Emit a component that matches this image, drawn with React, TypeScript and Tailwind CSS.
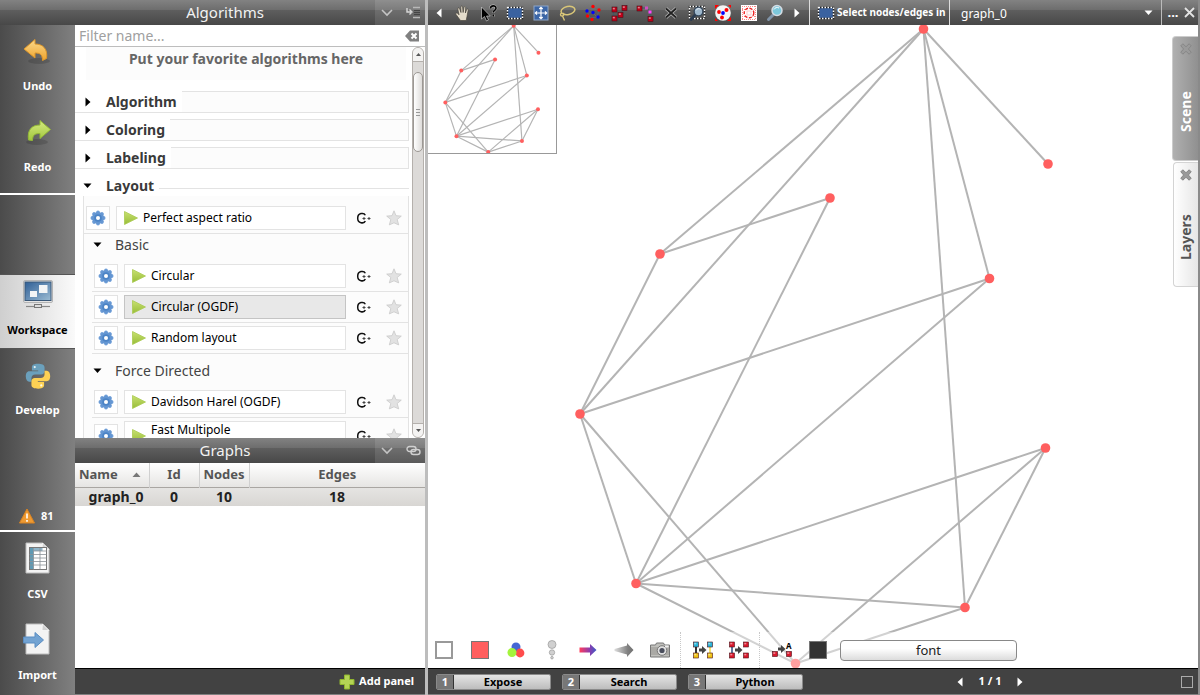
import React, { useState } from "react";

const font = "font-['Noto_Sans','Open_Sans',sans-serif]";
const barBg =
  "bg-[linear-gradient(to_bottom,#828282_0%,#6e6e6e_38%,#5e5e5e_40%,#484848_100%)]";
const footerBg = "border-t border-t-black border-b border-b-[#808080] bg-[#424242]";
const line = "border-[#e3e3e3]";

const nodes: Record<string, [number, number]> = {
  a: [495.5, 4],
  b: [620, 139],
  c: [402, 173],
  d: [232, 229],
  e: [561.5, 253.5],
  f: [152, 389],
  g: [617.5, 423],
  h: [208, 558.5],
  i: [537, 582.5],
  j: [367.5, 638.5],
};

const edges = "ab ad af ae ai cd ch df ef eh fh fj hg hi hj gi gj ij".split(" ");

interface GraphProps {
  viewBox: string;
  stroke: number;
  radius: number;
  className: string;
}

const Graph: React.FC<GraphProps> = ({ viewBox, stroke, radius, className }) => (
  <svg viewBox={viewBox} className={className} aria-hidden="true">
    {edges.map((e) => (
      <line
        key={e}
        x1={nodes[e[0]][0]}
        y1={nodes[e[0]][1]}
        x2={nodes[e[1]][0]}
        y2={nodes[e[1]][1]}
        stroke="#b4b4b4"
        strokeWidth={stroke}
      />
    ))}
    {Object.entries(nodes).map(([id, [x, y]]) => (
      <circle key={id} cx={x} cy={y} r={radius} fill="#ff5f5f" />
    ))}
  </svg>
);

/* ---------- small icons ---------- */

const Triangle = ({ dir, className = "" }: { dir: "l" | "r" | "d" | "u"; className?: string }) => {
  const d = {
    l: "M6.5 0.5v9L1.5 5z",
    r: "M2.5 0.5v9L7.5 5z",
    d: "M0.5 2.5h8L4.5 7z",
    u: "M0.5 7h8L4.5 2.5z",
  }[dir];
  return (
    <svg viewBox="0 0 9 10" width="9" height="10" fill="currentColor" className={className}>
      <path d={d} />
    </svg>
  );
};

const petals = [0, 45, 90, 135, 180, 225, 270, 315];

const Gear = () => (
  <svg viewBox="0 0 16 16" width="16" height="16">
    {petals.map((angle) => (
      <circle key={angle} cx="8" cy="2.4" r="1.9" fill="#6c9cd6" transform={`rotate(${angle} 8 8)`} />
    ))}
    <circle cx="8" cy="8" r="6" fill="#6496d2" />
    <circle cx="8" cy="8" r="3.8" fill="#4c84c6" />
    <circle cx="8" cy="8" r="2" fill="#fff" />
  </svg>
);

const Play = () => (
  <svg viewBox="0 0 16 16" width="16" height="16" className="shrink-0">
    <defs>
      <linearGradient id="play" x1="0" y1="0" x2="0" y2="1">
        <stop offset="0" stopColor="#c8e070" />
        <stop offset="1" stopColor="#98bd38" />
      </linearGradient>
    </defs>
    <path d="M1.5 1.5v13L14.5 8z" fill="url(#play)" stroke="#a9ca52" strokeWidth="0.8" />
  </svg>
);

const Cpp = () => (
  <svg viewBox="0 0 16 14" width="16" height="14" fill="none" stroke="#111">
    <path
      d="M9.300 4.300C8.600 2.600 6.800 2.200 5 2.600 2.600 3.200 1.700 5 1.700 7.200s1 4 3.300 4.500c1.800.4 3.700-.1 4.300-1.700"
      strokeWidth="1.500"
    />
    <path d="M6.500 7.500h3M8 6v3M11.500 7.500h3M13 6v3" stroke="#444" strokeWidth="1" />
  </svg>
);

const Star = () => (
  <svg viewBox="0 0 16 16" width="16" height="16">
    <path
      d="M8 .8l2 4.900 5.300.4-4.100 3.400 1.500 5.400L8 12.800l-4.700 2.100 1.500-5.400L.7 6.100 6 5.700z"
      fill="#e2e2e2"
      stroke="#c9c9c9"
      strokeWidth="0.8"
    />
  </svg>
);

const BoldX = ({ fill, stroke }: { fill: string; stroke: string }) => (
  <svg viewBox="0 0 12 12" width="12" height="12">
    <path
      d="M2.800.8L6 3.700 9.200.8l2 2L8.400 6l2.800 3.200-2 2L6 8.300l-3.200 2.900-2-2L3.600 6 .8 2.800z"
      fill={fill}
      stroke={stroke}
      strokeWidth="0.9"
    />
  </svg>
);

const Chevron = () => (
  <svg viewBox="0 0 12 8" width="12" height="8" fill="none" stroke="#c4c4c4" strokeWidth="1.6">
    <path d="M1 1l5 5 5-5" />
  </svg>
);

const Cross = () => (
  <svg viewBox="0 0 11 11" width="11" height="11" stroke="#e4e4e4" strokeWidth="1.8">
    <path d="M1 1l9 9M10 1l-9 9" />
  </svg>
);

const Cube = ({ x, y, c = "#d8182c" }: { x: number; y: number; c?: string }) => (
  <g>
    <rect x={x} y={y} width="5" height="5" fill={c} stroke="#4a1018" strokeWidth="0.6" />
    <rect x={x + 0.8} y={y + 0.8} width="2" height="1.6" fill="#fff" opacity="0.5" />
  </g>
);

/* ---------- sidebar icons ---------- */

const UndoIcon = () => (
  <svg viewBox="0 0 32 32" width="32" height="32">
    <defs>
      <linearGradient id="undo" x1="0" y1="0" x2="0" y2="1">
        <stop offset="0" stopColor="#fbd98c" />
        <stop offset="1" stopColor="#eea32c" />
      </linearGradient>
    </defs>
    <ellipse cx="17" cy="27" rx="11" ry="3" fill="#000" opacity="0.14" />
    <path d="M2 15L13 5.500V10c8 0 13 5 11.500 14.500l-4 2c0-6-2.500-7.500-7.500-7.500v5z" fill="url(#undo)" stroke="#dc962a" />
  </svg>
);

const RedoIcon = () => (
  <svg viewBox="0 0 32 32" width="32" height="32">
    <defs>
      <linearGradient id="redo" x1="0" y1="0" x2="0" y2="1">
        <stop offset="0" stopColor="#d6ea80" />
        <stop offset="1" stopColor="#a0c63c" />
      </linearGradient>
    </defs>
    <ellipse cx="15" cy="27" rx="11" ry="3" fill="#000" opacity="0.14" />
    <path d="M28.500 14.500L18 5.500V10C10 10 5 14.500 6.500 25l4 .5c0-6 3-7 7.500-7v5z" fill="url(#redo)" stroke="#93b936" />
  </svg>
);

const WorkspaceIcon = () => (
  <svg viewBox="0 0 32 32" width="32" height="32">
    <defs>
      <linearGradient id="screen" x1="0" y1="0" x2="1" y2="1">
        <stop offset="0" stopColor="#2f5f96" />
        <stop offset="1" stopColor="#9cbcd4" />
      </linearGradient>
    </defs>
    <rect x="1.500" y="2.500" width="29" height="22" rx="1.500" fill="#e4e4e4" stroke="#b4b4b4" />
    <rect x="3" y="4" width="26" height="18.500" fill="url(#screen)" stroke="#3a5878" />
    <rect x="17" y="7" width="8.500" height="8" fill="#f2f4f6" />
    <rect x="8" y="13" width="7" height="6" fill="#f2f4f6" />
    <path d="M4 28.500h24" stroke="#888" strokeWidth="1.200" />
    <rect x="12.500" y="26.500" width="7" height="3" fill="#ddd" stroke="#777" />
  </svg>
);

const PythonIcon = () => (
  <svg viewBox="0 0 32 32" width="30" height="30">
    <path
      d="M15.800 3c-6 0-6.300 2.500-6.300 3.800V10h6.700v1H6.800C4 11 3 13.500 3 16.500S4.500 22 6.600 22H9v-3.500c0-2.400 1.700-4 4-4h6.500c2 0 3.500-1.500 3.500-3.500V6.800C23 4 20 3 15.800 3z"
      fill="#6ba0bc"
    />
    <path
      d="M16.200 29.500c6 0 6.300-2.500 6.300-3.800v-3.200h-6.700v-1h9.400c2.800 0 3.800-2.500 3.800-5.500s-1.500-5.500-3.600-5.500H23V14c0 2.400-1.700 4-4 4h-6.500c-2 0-3.500 1.500-3.500 3.500v4.200c0 2.800 3 3.800 7.200 3.800z"
      fill="#fdd154"
    />
    <circle cx="12.500" cy="6.500" r="1.200" fill="#e8f2f6" />
    <circle cx="19.500" cy="26" r="1.200" fill="#fffbe8" />
  </svg>
);

const Paper = ({ children }: { children: React.ReactNode }) => (
  <svg viewBox="0 0 32 32" width="32" height="32">
    <path d="M4 1h16.500l6.500 6v24H4z" fill="#f3f3f3" stroke="#bdbdbd" />
    <path d="M20.500 1L20 7.500h7z" fill="#d0d0d0" stroke="#fff" strokeWidth="0.6" />
    {children}
  </svg>
);

const CsvIcon = () => (
  <Paper>
    <rect x="7.500" y="5.500" width="17" height="22" fill="#fff" stroke="#777" />
    <rect x="8" y="6" width="3.500" height="21" fill="#5f9ab4" />
    <rect x="11.500" y="6" width="9" height="3" fill="#8fb4c8" />
    <path
      d="M11.500 9h13M7.500 12.500h17M7.500 16h17M7.500 19.500h17M7.500 23h17M11.500 6v21.500M18 6v21.500"
      stroke="#8a9298"
      strokeWidth="0.8"
    />
  </Paper>
);

const ImportIcon = () => (
  <Paper>
    <path d="M1.500 14H13V9.500l8.500 7.500-8.500 7.500V20H1.500z" fill="#73a3d2" stroke="#5a8dc2" />
  </Paper>
);

interface NavItemProps {
  label: string;
  icon: React.ReactNode;
  className: string;
}

const NavItem: React.FC<NavItemProps> = ({ label, icon, className }) => (
  <button className={`flex w-full shrink-0 flex-col items-center text-[11px] font-bold leading-4 ${className}`}>
    <span className="flex h-8 items-center">{icon}</span>
    <span className="mt-2">{label}</span>
  </button>
);

const Sidebar = () => (
  <nav className="flex w-[75px] shrink-0 flex-col bg-linear-to-r from-[#4b4b4b] to-[#808080]">
    <div className="h-[170px] shrink-0 border-b-2 border-white">
      <NavItem label="Undo" icon={<UndoIcon />} className="h-[81px] gap-1 pt-[9px] text-white" />
      <NavItem label="Redo" icon={<RedoIcon />} className="h-[81px] gap-1 pt-[9px] text-white" />
    </div>
    <div className="h-[79px] shrink-0" />
    <NavItem
      label="Workspace"
      icon={<WorkspaceIcon />}
      className="h-[75px] gap-1 border-y border-[#555] bg-linear-to-r from-[#cfcfcf] to-[#fafafa] pt-[3px] text-black"
    />
    <NavItem label="Develop" icon={<PythonIcon />} className="h-[81px] gap-[2px] pt-[11px] text-white" />
    <div className="flex-1" />
    <button className="flex h-7 shrink-0 items-center gap-[6px] pl-[19px] text-[11px] font-bold text-white">
      <svg viewBox="0 0 16 16" width="16" height="16">
        <path d="M8 1l7.500 14H.5z" fill="#ee9a32" stroke="#d98322" strokeLinejoin="round" />
        <path d="M8 5.500v5M8 12v1.800" stroke="#fff" strokeWidth="1.600" />
      </svg>
      81
    </button>
    <div className="h-[165px] shrink-0 border-t-2 border-white">
      <NavItem label="CSV" icon={<CsvIcon />} className="h-[81px] gap-1 pt-[10px] text-white" />
      <NavItem label="Import" icon={<ImportIcon />} className="h-[81px] gap-1 pt-[10px] text-white" />
    </div>
  </nav>
);

/* ---------- algorithms ---------- */

const PanelHeader = ({ title, children }: { title: string; children: React.ReactNode }) => (
  <header className={`flex h-[25px] shrink-0 items-center text-[15px] text-[#f2f2f2] ${barBg}`}>
    <h2 className="flex-1 text-center">{title}</h2>
    <div className="flex h-full w-[50px] items-center justify-between bg-white/10 pr-1 pl-[6px]">
      <button aria-label="Collapse">
        <Chevron />
      </button>
      {children}
    </div>
  </header>
);

const ClosedGroup = ({ title }: { title: string }) => (
  <section className="mt-[6px] flex h-[22px]">
    <button className={`flex items-center border-b pr-[5px] pl-2 text-[14px] font-bold ${line}`}>
      <Triangle dir="r" className="mr-[14px] text-black" />
      {title}
    </button>
    <div className={`flex-1 border border-l-0 bg-[#fcfcfc] ${line}`} />
  </section>
);

interface RowProps {
  name: string;
  active?: boolean;
  tall?: boolean;
}

const AlgorithmRow: React.FC<RowProps> = ({ name, active = false, tall = false }) => (
  <div className={`flex items-center border-b pr-[6px] pl-[2px] ${line} ${tall ? "h-[37px]" : "h-[31px]"}`}>
    <button
      aria-label={`${name} settings`}
      className={`flex size-6 shrink-0 items-center justify-center border bg-white ${line}`}
    >
      <Gear />
    </button>
    <button
      className={`ml-[6px] flex min-w-0 flex-1 items-center gap-1 border pl-[6px] text-left text-[12px] leading-4 text-black ${
        tall ? "h-[30px]" : "h-6"
      } ${active ? "border-[#c4c4c4] bg-[#e8e8e8]" : "border-[#e3e3e3] bg-white"}`}
    >
      <Play />
      <span className={tall ? "self-start" : ""}>{name}</span>
    </button>
    <span className="ml-[10px]">
      <Cpp />
    </span>
    <button aria-label={`Add ${name} to favorites`} className="ml-[14px]">
      <Star />
    </button>
  </div>
);

const SubGroup = ({ title, className = "", items }: { title: string; className?: string; items: RowProps[] }) => (
  <section className="ml-2">
    <button className={`flex w-full items-center text-[14px] text-[#444] ${className}`}>
      <Triangle dir="d" className="mr-[13px] ml-px text-black" />
      {title}
    </button>
    {items.map((item) => (
      <AlgorithmRow key={item.name} {...item} />
    ))}
  </section>
);

const ScrollBar = () => (
  <div className="flex w-3 shrink-0 flex-col rounded-md border border-[#b4b0ac] bg-[#dcdad8]" aria-hidden="true">
    <div className="flex h-[14px] items-center justify-center rounded-t-md border-b border-[#b4b0ac] bg-[#f4f3f2]">
      <svg width="5" height="3" viewBox="0 0 5 3">
        <path d="M0 3h5L2.500 0z" fill="#555" />
      </svg>
    </div>
    <div className="mt-[10px] flex h-20 flex-col items-center justify-center gap-[2px] rounded-md border border-[#9c9894] bg-linear-to-r from-white to-[#dedcda]">
      <i className="h-px w-1 bg-[#999]" />
      <i className="h-px w-1 bg-[#999]" />
      <i className="h-px w-1 bg-[#999]" />
    </div>
    <div className="flex-1" />
    <div className="flex h-[14px] items-center justify-center rounded-b-md border-t border-[#b4b0ac] bg-[#f4f3f2]">
      <svg width="5" height="3" viewBox="0 0 5 3">
        <path d="M0 0h5L2.500 3z" fill="#555" />
      </svg>
    </div>
  </div>
);

const Algorithms = () => {
  const [filter, setFilter] = useState("");

  return (
    <section className="flex min-h-0 flex-1 flex-col bg-white text-[#3a3a3a]">
      <div className="flex h-[22px] shrink-0 items-center border-b border-[#bdbdbd] pr-[6px] pl-1">
        <input
          aria-label="Filter name"
          placeholder="Filter name..."
          value={filter}
          onChange={(e) => setFilter(e.target.value)}
          className="min-w-0 flex-1 text-[14px] leading-5 outline-none placeholder:text-[#a0a0a0]"
        />
        <button aria-label="Clear filter" onClick={() => setFilter("")}>
          <svg viewBox="0 0 14 12" width="14" height="12">
            <path d="M0 6l5-5.500h9v11H5z" fill="#808080" />
            <path d="M6.500 3.500l5 5M11.500 3.500l-5 5" stroke="#fff" strokeWidth="2" />
          </svg>
        </button>
      </div>
      <div className="flex min-h-0 flex-1">
        <div className="min-w-0 flex-1 overflow-hidden">
          <p className="mr-[3px] ml-[11px] h-[33px] bg-[#fcfcfc] pt-[2px] text-center text-[14px] font-bold leading-5 text-[#666]">
            Put your favorite algorithms here
          </p>
          <div className="pt-[5px]">
            <ClosedGroup title="Algorithm" />
            <ClosedGroup title="Coloring" />
            <ClosedGroup title="Labeling" />
          </div>
          <section>
            <div className="flex h-[27px] items-center pt-[7px]">
              <button className="flex items-center pr-[5px] pl-2 text-[14px] font-bold leading-5">
                <Triangle dir="d" className="mr-[14px] text-black" />
                Layout
              </button>
              <div className={`mt-1 h-px flex-1 border-t ${line}`} />
            </div>
            <div className={`ml-2 border-x bg-[#fcfcfc] pt-[7px] ${line}`}>
              <AlgorithmRow name="Perfect aspect ratio" />
              <SubGroup
                title="Basic"
                className="h-[27px] pb-[6px]"
                items={[{ name: "Circular" }, { name: "Circular (OGDF)", active: true }, { name: "Random layout" }]}
              />
              <SubGroup
                title="Force Directed"
                className="h-[33px]"
                items={[{ name: "Davidson Harel (OGDF)" }, { name: "Fast Multipole", tall: true }]}
              />
            </div>
          </section>
        </div>
        <div className="flex pr-px pl-[3px]">
          <ScrollBar />
        </div>
      </div>
    </section>
  );
};

const Graphs = () => (
  <section className="flex h-[257px] shrink-0 flex-col bg-white">
    <PanelHeader title="Graphs">
      <button aria-label="Link graphs">
        <svg viewBox="0 0 15 11" width="15" height="11" fill="none" stroke="#d0d0d0" strokeWidth="1.400">
          <rect x="1" y="1.500" width="9" height="5" rx="2.500" />
          <rect x="5" y="4.500" width="9" height="5" rx="2.500" />
        </svg>
      </button>
    </PanelHeader>
    <table className="w-full table-fixed text-[13px] font-bold">
      <thead className="bg-linear-to-b from-white to-[#e6e5e3] text-[#555]">
        <tr className="h-6 border-b border-[#a9a6a2]">
          <th className="w-[74px] border-r border-[#d0d0d0] pl-1 text-left">
            <span className="flex items-center justify-between pr-2">
              Name
              <Triangle dir="u" className="text-[#777]" />
            </span>
          </th>
          <th className="w-[50px] border-r border-[#d0d0d0]">Id</th>
          <th className="w-[50px] border-r border-[#d0d0d0]">Nodes</th>
          <th>Edges</th>
        </tr>
      </thead>
      <tbody className="text-center text-[14px] text-[#222]">
        <tr className="h-[19px] bg-linear-to-b from-[#e6e5e3] to-[#d8d6d3] leading-4">
          <td className="pl-2">graph_0</td>
          <td>0</td>
          <td>10</td>
          <td>18</td>
        </tr>
      </tbody>
    </table>
    <div className="flex-1" />
    <footer className={`flex h-[27px] shrink-0 items-center justify-end pr-[11px] ${footerBg}`}>
      <button className="flex items-center gap-1 text-[11px] font-bold text-white">
        <svg viewBox="0 0 16 16" width="16" height="16">
          <path d="M5.500 1h5v4.500H15v5h-4.500V15h-5v-4.500H1v-5h4.500z" fill="#b4d455" stroke="#8fb52f" />
        </svg>
        Add panel
      </button>
    </footer>
  </section>
);

/* ---------- view tool bar ---------- */

const Marquee = () => (
  <>
    <rect x="1.500" y="3.500" width="15" height="11" fill="#3a62a0" stroke="#222" strokeWidth="1.500" />
    <rect x="1.500" y="3.500" width="15" height="11" fill="none" stroke="#fff" strokeWidth="1.500" strokeDasharray="1.500 1.500" />
  </>
);

const tools: { label: string; icon: React.ReactNode }[] = [
  {
    label: "Navigate",
    icon: (
      <path
        d="M6.500 16.500L2 10.500c-.8-1.200.8-2 1.600-1.200L5 10.800 3.800 5c-.2-1.200 1.400-1.600 1.800-.4L7 8.500 6.800 3c0-1.300 1.700-1.300 1.800 0l.5 5.500L10 3.400c.2-1.200 1.800-1 1.700.3l-.3 5.300 1.200-3.400c.4-1.100 1.800-.7 1.600.5L13 12.500l-.8 4z"
        fill="#e4dccb"
        stroke="#4a463e"
        strokeWidth="0.7"
      />
    ),
  },
  {
    label: "Get information",
    icon: (
      <>
        <path d="M1.500 3v12l3-2.500L6.500 17l2-1-2-4h3.800z" fill="#000" stroke="#ddd" strokeWidth="0.6" />
        <path d="M10.500 4.500C10.500 1 16 1 16 4.300c0 2-2.800 2.200-2.800 4.500M13.200 10.500v2" stroke="#c8c8c8" strokeWidth="2.600" fill="none" />
        <path d="M10.500 4.500C10.500 1 16 1 16 4.300c0 2-2.800 2.200-2.800 4.200M13.200 10.500v2" stroke="#000" strokeWidth="1.600" fill="none" />
      </>
    ),
  },
  { label: "Rectangle selection", icon: <Marquee /> },
  {
    label: "Move selection",
    icon: (
      <>
        <rect x="2" y="2" width="14" height="14" fill="#3c66a6" stroke="#8ea6c8" />
        <path d="M9 3.500v11M3.500 9h11M7.300 5L9 3.300 10.700 5M7.300 13L9 14.700l1.700-1.700M5 7.300L3.300 9 5 10.700M13 7.300L14.700 9 13 10.700" fill="none" stroke="#fff" strokeWidth="1.200" />
      </>
    ),
  },
  {
    label: "Lasso selection",
    icon: (
      <>
        <ellipse cx="10" cy="6.500" rx="7" ry="4" fill="none" stroke="#d9c678" strokeWidth="1.500" transform="rotate(-12 10 6.500)" />
        <path d="M4 9c-2 .5-2 3 0 3s2.500-2 1-2.800M4.500 12l2 4.500" fill="none" stroke="#d9c678" strokeWidth="1.400" />
      </>
    ),
  },
  {
    label: "Select reachable nodes",
    icon: (
      <>
        <path d="M3 7l6-4 6 3-2 7-7 1zM3 7l6 2 4 4" fill="none" stroke="#667" strokeWidth="0.7" />
        {[[9, 2.5], [15, 6], [3.5, 12], [8, 15.5]].map(([x, y]) => (
          <circle key={x} cx={x} cy={y} r="1.700" fill="#f00" />
        ))}
        {[[3, 7], [9, 8.5], [14, 13]].map(([x, y]) => (
          <circle key={x} cx={x} cy={y} r="1.700" fill="#00f" />
        ))}
      </>
    ),
  },
  {
    label: "Add nodes and edges",
    icon: (
      <>
        <path d="M3.500 5v9M14 4l-4 7" stroke="#456" />
        <Cube x={2} y={3} c="#c00018" />
        <Cube x={2} y={12} c="#c00018" />
        <Cube x={8} y={8.5} c="#c00018" />
        <Cube x={12} y={1.5} c="#c00018" />
      </>
    ),
  },
  {
    label: "Edit edge bends",
    icon: (
      <>
        <path d="M3 4h8l3 4v7" stroke="#456" fill="none" />
        <Cube x={1} y={2} c="#c00018" />
        <Cube x={12} y={12.5} c="#c00018" />
        <rect x="9" y="2.500" width="3" height="3" fill="#d050c0" />
        <rect x="12.500" y="6.500" width="3" height="3" fill="#f4f" />
      </>
    ),
  },
  {
    label: "Delete",
    icon: (
      <>
        <path d="M4 4.500l10 9M14 4.500l-10 9" stroke="#bbb" strokeWidth="3.400" />
        <path d="M4 4.500l10 9M14 4.500l-10 9" stroke="#222" strokeWidth="1.900" />
      </>
    ),
  },
  {
    label: "Zoom on rectangle",
    icon: (
      <>
        <rect x="1.500" y="2.500" width="15" height="12" fill="none" stroke="#222" strokeWidth="1.500" />
        <rect x="1.500" y="2.500" width="15" height="12" fill="none" stroke="#fff" strokeWidth="1.500" strokeDasharray="1.500 1.500" />
        <path d="M7.500 10.500L3 15.500" stroke="#2c3c50" strokeWidth="2.800" strokeLinecap="round" />
        <circle cx="10.500" cy="7.500" r="4.400" fill="#9fb8cc" stroke="#34475c" strokeWidth="1.400" />
        <path d="M8 6.500c1-2 3-2.500 4.500-1" stroke="#e8f0f6" fill="none" />
      </>
    ),
  },
  {
    label: "Fish eye",
    icon: (
      <>
        <path d="M1 1h4L1 5zM17 17h-4l4-4zM1 17h3l-3-3zM17 1h-3l3 3z" fill="#f00" />
        <circle cx="9" cy="9" r="7.800" fill="#f4f4f4" />
        <circle cx="5" cy="8" r="1.900" fill="#f00" />
        <circle cx="12.500" cy="6" r="2" fill="#f00" />
        <circle cx="8" cy="13.500" r="1.900" fill="#f00" />
        <circle cx="9" cy="9" r="1.900" fill="#00f" />
      </>
    ),
  },
  {
    label: "Magnifying grid",
    icon: (
      <>
        <rect x="1" y="1" width="16" height="16" fill="#fff" />
        <path d="M2 2.500h14M2 15.500h14M2.500 2v14M15.500 2v14M2 5.500h14M2 12.500h14" stroke="#f88" strokeDasharray="1 1" />
        <circle cx="9" cy="9" r="4.800" fill="#fff" stroke="#e22" strokeWidth="1.400" strokeDasharray="3 1.500" />
        <rect x="7" y="7" width="4" height="4" fill="none" stroke="#fcc" />
      </>
    ),
  },
  {
    label: "Magnify",
    icon: (
      <>
        <path d="M7.500 10.500l-5 5" stroke="#8094a8" strokeWidth="3" strokeLinecap="round" />
        <circle cx="11" cy="6.500" r="5" fill="#7cc8dc" stroke="#d4dce4" strokeWidth="1.500" />
        <path d="M8 5.500c1-2 3-2.500 5-1.500" stroke="#fff" fill="none" />
      </>
    ),
  },
];

const Toolbar = () => (
  <header className={`flex h-[25px] shrink-0 items-center text-white ${barBg}`}>
    <button aria-label="Previous tools" className="flex w-[22px] justify-center">
      <Triangle dir="l" />
    </button>
    {tools.map((tool) => (
      <button key={tool.label} aria-label={tool.label} className="flex w-[26px] shrink-0 justify-center">
        <svg viewBox="0 0 18 18" width="18" height="18">
          {tool.icon}
        </svg>
      </button>
    ))}
    <button aria-label="Next tools" className="flex w-[21px] justify-center pr-1">
      <Triangle dir="r" />
    </button>
    <label
      htmlFor="graph"
      className="flex h-full w-[141px] shrink-0 items-center gap-[2px] border-x border-[#ddd] pl-[7px] text-[10px] font-bold whitespace-nowrap"
    >
      <svg viewBox="0 0 18 18" width="18" height="18" className="shrink-0">
        <Marquee />
      </svg>
      Select nodes/edges in
    </label>
    <div className="relative h-full min-w-0 flex-1 border-r border-[#bbb]">
      <select id="graph" className="h-full w-full appearance-none bg-transparent pl-[11px] text-[12px] outline-none">
        <option>graph_0</option>
      </select>
      <Triangle dir="d" className="pointer-events-none absolute top-2 right-2" />
    </div>
    <button className="w-[22px] text-[13px] font-bold">...</button>
    <button aria-label="Close view" className="mr-[3px]">
      <Cross />
    </button>
  </header>
);

/* ---------- rendering options under the canvas ---------- */

const Option = ({ label, children }: { label: string; children: React.ReactNode }) => (
  <button aria-label={label} className="flex w-9 shrink-0 justify-center">
    {children}
  </button>
);

const Dots = () => <span className="mr-1 ml-[2px] h-9 w-px shrink-0 border-l border-dotted border-[#c8c8c8]" />;

const QuickAccess = () => (
  <div className="absolute inset-x-0 bottom-0 flex h-9 items-center bg-white/40">
    <button aria-label="Background color" className="ml-[7px] size-[18px] shrink-0 border-2 border-[#999] bg-white" />
    <button aria-label="Node color" className="mr-[9px] ml-[18px] size-[18px] shrink-0 border border-[#777] bg-[#ff5f5f]" />
    <Option label="Color interpolation">
      <svg viewBox="0 0 18 18" width="18" height="18">
        <circle cx="9" cy="6" r="4.500" fill="#4466d4" />
        <circle cx="13" cy="12" r="4.400" fill="#ff4c4c" />
        <circle cx="5" cy="11.500" r="4.500" fill="#a4f43c" />
      </svg>
    </Option>
    <Option label="Size interpolation">
      <svg viewBox="0 0 12 20" width="12" height="20" fill="#d0d0d0" stroke="#999" strokeWidth="0.7">
        <circle cx="6" cy="4.500" r="4" />
        <circle cx="6" cy="12.500" r="2.700" />
        <circle cx="6" cy="17.700" r="1.300" />
      </svg>
    </Option>
    <Option label="Edge color interpolation">
      <svg viewBox="0 0 18 14" width="18" height="14">
        <defs>
          <linearGradient id="ecol">
            <stop offset="0" stopColor="#ff3c5c" />
            <stop offset="0.600" stopColor="#8a3cae" />
            <stop offset="1" stopColor="#3c5cc4" />
          </linearGradient>
        </defs>
        <path d="M.5 4.500H11V1l6.500 6-6.500 6V9.500H.5z" fill="url(#ecol)" />
      </svg>
    </Option>
    <Option label="Edge size interpolation">
      <svg viewBox="0 0 20 14" width="20" height="14">
        <defs>
          <linearGradient id="esize">
            <stop offset="0" stopColor="#ddd" />
            <stop offset="0.700" stopColor="#808080" />
            <stop offset="1" stopColor="#707070" />
          </linearGradient>
        </defs>
        <path d="M.5 6L13 2.500V0l6.500 7L13 14v-2.500L.5 8z" fill="url(#esize)" />
      </svg>
    </Option>
    <Option label="Snapshot">
      <svg viewBox="0 0 20 16" width="20" height="16">
        <path d="M.5 3h5l1-2h7l1 2h5v12H.5z" fill="#c0c0bc" stroke="#777" />
        <path d="M1 5h18v8H1z" fill="#aaa9a5" />
        <circle cx="12" cy="8.500" r="4.800" fill="#e0e0e0" stroke="#777" />
        <circle cx="12" cy="8.500" r="2.600" fill="#4a4e5c" />
        <rect x="15" y="3.500" width="3.500" height="2" fill="#eee" />
      </svg>
    </Option>
    <Dots />
    <Option label="Edge color from nodes">
      <svg viewBox="0 0 20 18" width="20" height="18">
        <path d="M3 4v10" stroke="#000" strokeWidth="1.600" />
        <path d="M17 4v10" stroke="#f0dc50" strokeWidth="1.600" />
        <path d="M6 7.500h3V5l4.500 4L9 13v-2.500H6z" fill="#444" />
        <Cube x={0.5} y={1} c="#28b4d8" />
        <Cube x={14.5} y={1} c="#28b4d8" />
        <Cube x={0.5} y={12} c="#f0c414" />
        <Cube x={14.5} y={12} c="#f0c414" />
      </svg>
    </Option>
    <Option label="Display edges">
      <svg viewBox="0 0 20 18" width="20" height="18">
        <path d="M3 4v10" stroke="#3a5484" strokeWidth="1.600" />
        <path d="M6 7.500h3V5l4.500 4L9 13v-2.500H6z" fill="#444" />
        <Cube x={0.5} y={1} />
        <Cube x={14.5} y={1} />
        <Cube x={0.5} y={12} />
        <Cube x={14.5} y={12} />
      </svg>
    </Option>
    <Dots />
    <Option label="Display labels">
      <svg viewBox="0 0 20 18" width="20" height="18">
        <path d="M6 6.500h3V4l4.500 4L9 12V9.500H6z" fill="#444" />
        <Cube x={0.5} y={10.5} />
        <Cube x={14.5} y={10.5} />
        <text x="14" y="8" fontSize="8" fontWeight="bold" fill="#000">
          A
        </text>
      </svg>
    </Option>
    <button aria-label="Label color" className="ml-[9px] size-[18px] shrink-0 border border-[#777] bg-[#333]" />
    <button className="ml-[13px] h-[21px] w-[177px] rounded-sm border border-[#888] bg-linear-to-b from-white from-40% to-[#dcdcdc] text-[13px] leading-4 text-[#222]">
      font
    </button>
  </div>
);

const SideTab = ({ label, active = false }: { label: string; active?: boolean }) => (
  <div
    className={`flex h-[125px] flex-col items-center rounded-l-[4px] border border-r-0 pt-[6px] ${
      active
        ? "w-[26px] border-[#ccc] bg-linear-to-r from-[#b0b0b0] to-[#909090] text-white"
        : "w-[25px] border-[#d4d4d4] bg-linear-to-r from-white to-[#e6e6e6] text-[#555]"
    }`}
  >
    <button aria-label={`Close ${label}`}>
      <BoldX fill={active ? "#9a9a9a" : "#999"} stroke={active ? "#858585" : "#808080"} />
    </button>
    <button className="flex-1 rotate-180 pb-2 text-center text-[14px] leading-5 font-bold [writing-mode:vertical-rl]">
      {label}
    </button>
  </div>
);

const Shortcut = ({ index, label }: { index: number; label: string }) => (
  <button className="flex h-4 w-[115px] overflow-hidden rounded-[2px] border border-[#8a8a8a] text-[11px] leading-[14px] font-bold">
    <span className="w-[17px] border-r border-[#333] bg-[#777] text-center text-white">{index}</span>
    <span className="flex-1 bg-linear-to-b from-[#e4e4e4] to-[#bdbdbd] pl-[2px] text-center text-black">{label}</span>
  </button>
);

const View = () => (
  <main className="flex min-w-0 flex-1 flex-col border-r-2 border-[#8a8a8a] bg-white">
    <Toolbar />
    <div className="relative min-h-0 flex-1">
      <Graph viewBox="0 0 770 643" stroke={2} radius={4.8} className="absolute inset-0 h-full w-full" />
      <div className="absolute top-0 left-0 size-[129px] border-r border-b border-[#999] bg-white">
        <Graph viewBox="65 0 643 643" stroke={6} radius={10} className="h-full w-full" />
      </div>
      <div className="absolute top-[11px] right-0 flex flex-col items-end gap-px">
        <SideTab label="Scene" active />
        <SideTab label="Layers" />
      </div>
      <QuickAccess />
    </div>
    <footer className={`flex h-[27px] shrink-0 items-center pr-[5px] pl-2 text-white ${footerBg}`}>
      <div className="flex gap-[11px]">
        <Shortcut index={1} label="Expose" />
        <Shortcut index={2} label="Search" />
        <Shortcut index={3} label="Python" />
      </div>
      <div className="flex flex-1 items-center justify-center gap-[14px] pr-1 text-[11px] font-bold">
        <button aria-label="Previous page">
          <Triangle dir="l" />
        </button>
        <span>1 / 1</span>
        <button aria-label="Next page">
          <Triangle dir="r" />
        </button>
      </div>
      <button aria-label="Full screen" className="size-3 border border-[#aaa]" />
    </footer>
  </main>
);

export default function App() {
  return (
    <div className={`flex h-screen overflow-hidden ${font}`}>
      <div className="flex w-[425px] shrink-0 flex-col">
        <div className={`pl-[75px] ${barBg}`}>
          <PanelHeader title="Algorithms">
            <button aria-label="Dock panel">
              <svg viewBox="0 0 15 13" width="15" height="13" fill="none">
                <path d="M1 2v4h4M3.500 3.500L6 6 3.500 8.500" stroke="#d8d8d8" strokeWidth="1.400" />
                <path d="M7 1.500h7M7 11.500h7" stroke="#b8b8b8" strokeWidth="1.400" />
                <path d="M8 4.500h6M8 6.500h6M8 8.500h6" stroke="#444" />
              </svg>
            </button>
          </PanelHeader>
        </div>
        <div className="flex min-h-0 flex-1">
          <Sidebar />
          <div className="flex min-w-0 flex-1 flex-col">
            <Algorithms />
            <Graphs />
          </div>
        </div>
      </div>
      <div className="w-[3px] shrink-0 bg-[#bdbdbd]" />
      <View />
    </div>
  );
}
